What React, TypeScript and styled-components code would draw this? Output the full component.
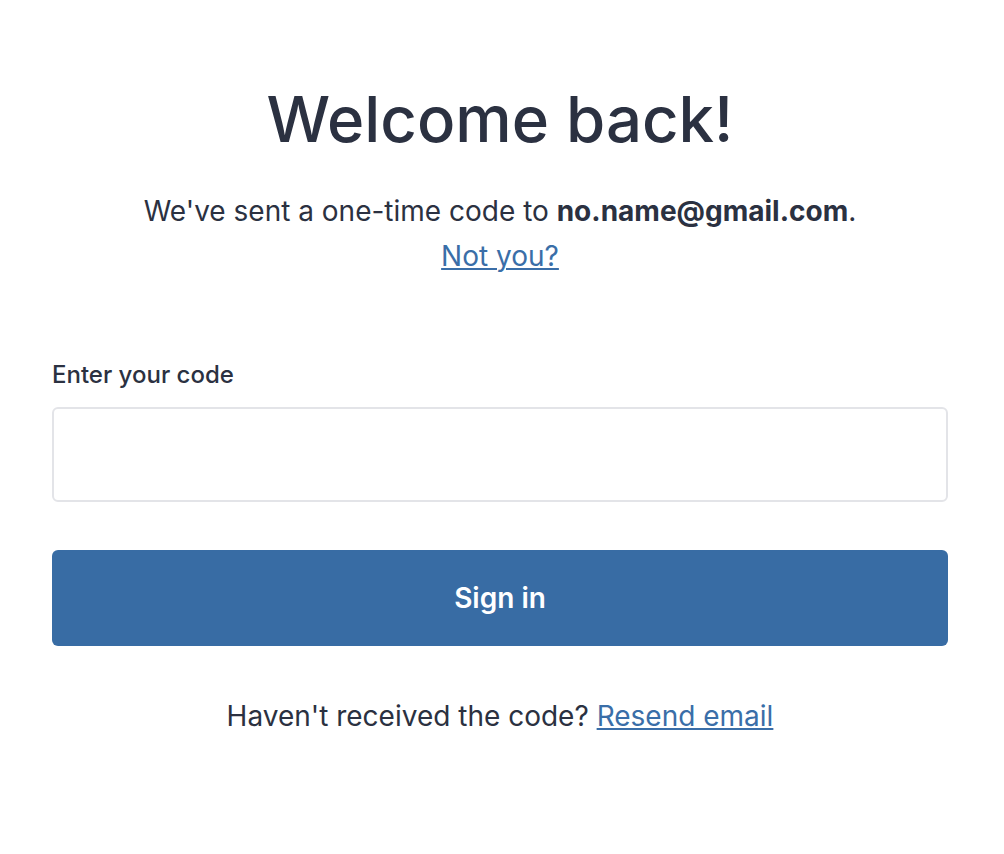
import * as React from 'react';
import styled, { createGlobalStyle } from 'styled-components';

const GlobalStyle = createGlobalStyle`
  * {
    box-sizing: border-box;
  }
  body {
    margin: 0;
    background: #ffffff;
    font-family: Inter, 'Noto Sans', sans-serif;
    color: #2b3141;
  }
`;

function App() {
  return (
    <>
      <GlobalStyle />
      <Wrapper>
        <Header>
          <Title>Welcome back!</Title>
          <Intro>
            We've sent a one-time code to <Bold>no.name@gmail.com</Bold>.
            <br />
            <Link href="#">Not you?</Link>
          </Intro>
        </Header>
        <Form onSubmit={(e) => e.preventDefault()}>
          <Field>
            <Label htmlFor="code">Enter your code</Label>
            <Input id="code" type="text" autoComplete="one-time-code" />
          </Field>
          <Button type="submit">Sign in</Button>
        </Form>
        <Footer>
          Haven't received the code? <Link href="#">Resend email</Link>
        </Footer>
      </Wrapper>
    </>
  );
}

const Wrapper = styled.main`
  width: 100%;
  min-height: 100vh;
  display: flex;
  flex-direction: column;
  padding: 80px 56px 80px 52px;
`;

const Header = styled.header`
  text-align: center;
`;

const Title = styled.h1`
  margin: 0;
  font-size: 63.5px;
  line-height: 77px;
  font-weight: 500;
  color: #2b3141;
`;

const Intro = styled.p`
  margin: 32px 0 0;
  font-size: 28px;
  line-height: 45px;
`;

const Bold = styled.strong`
  font-weight: 700;
`;

const Link = styled.a`
  color: #3a6ea8;
  text-decoration: underline;
  text-decoration-thickness: 2px;
  text-underline-offset: 2px;
`;

const Form = styled.form`
  display: flex;
  flex-direction: column;
  gap: 48px;
  margin-top: 81px;
`;

const Field = styled.div`
  display: flex;
  flex-direction: column;
  gap: 18px;
`;

const Label = styled.label`
  font-size: 24px;
  font-weight: 500;
  line-height: 29px;
`;

const Input = styled.input`
  height: 95px;
  width: 100%;
  border: 2px solid #e3e4e8;
  border-radius: 6px;
  padding: 0 20px;
  font-family: inherit;
  font-size: 28px;
  color: inherit;
  outline: none;
`;

const Button = styled.button`
  height: 96px;
  width: 100%;
  border: none;
  border-radius: 6px;
  background: #386ca4;
  color: #ffffff;
  font-family: inherit;
  font-size: 28px;
  font-weight: 600;
  cursor: pointer;
`;

const Footer = styled.p`
  margin: 49px 0 0;
  text-align: center;
  font-size: 28px;
  line-height: 42px;
`;

export default App;
